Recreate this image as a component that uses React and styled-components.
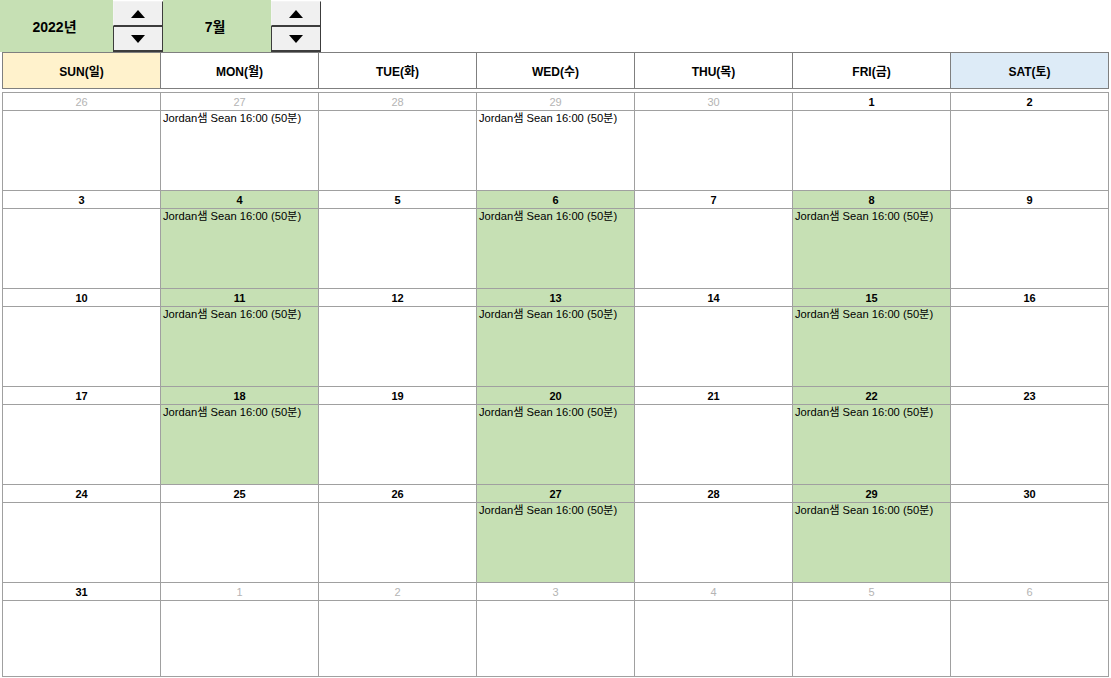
import React from "react";
import styled, { createGlobalStyle } from "styled-components";

const GlobalStyle = createGlobalStyle`
  body {
    margin: 0;
    background: #ffffff;
    font-family: "Liberation Sans", "Noto Sans CJK KR", sans-serif;
  }
`;

const DAYS = [
  { label: "SUN(일)", tone: "sun" },
  { label: "MON(월)" },
  { label: "TUE(화)" },
  { label: "WED(수)" },
  { label: "THU(목)" },
  { label: "FRI(금)" },
  { label: "SAT(토)", tone: "sat" },
];

const EVENT = "Jordan샘 Sean 16:00 (50분)";
const EVENT_DAYS = ["6-27", "6-29", "7-4", "7-6", "7-8", "7-11", "7-13", "7-15", "7-18", "7-20", "7-22", "7-27", "7-29"];

function buildWeeks() {
  const weeks = [];
  const start = new Date(2022, 5, 26);
  for (let w = 0; w < 6; w++) {
    const week = [];
    for (let d = 0; d < 7; d++) {
      const date = new Date(start);
      date.setDate(start.getDate() + w * 7 + d);
      const m = date.getMonth() + 1;
      const day = date.getDate();
      const inMonth = m === 7;
      const hasEvent = EVENT_DAYS.includes(`${m}-${day}`);
      week.push({ day, inMonth, hasEvent, highlight: inMonth && hasEvent });
    }
    weeks.push(week);
  }
  return weeks;
}

const Page = styled.div`
  width: 1111px;
  height: 678px;
  overflow: hidden;
`;

const TopBar = styled.div`
  display: flex;
  height: 52px;
`;

const Picker = styled.div`
  display: flex;
  align-items: center;
  justify-content: center;
  width: ${(p) => p.width}px;
  padding-right: ${(p) => p.shift || 0}px;
  box-sizing: border-box;
  background: #c6e0b4;
  font-size: 14px;
  font-weight: bold;
  color: #000;
`;

const Spinner = styled.div`
  display: flex;
  flex-direction: column;
  width: 50px;
  padding-top: 1px;
  background: #ffffff;
`;

const SpinButton = styled.button`
  display: flex;
  align-items: center;
  justify-content: center;
  flex: 1;
  padding: 0;
  margin: 0;
  background: #f0f0f0;
  border: 1px solid #3c3c3c;
  border-top-color: ${(p) => (p.down ? "#3c3c3c" : "#f4f4f4")};
  border-left-color: ${(p) => (p.down ? "#3c3c3c" : "#f4f4f4")};
  border-bottom-width: ${(p) => (p.down ? 2 : 1)}px;
  cursor: pointer;
  svg {
    display: block;
  }
`;

const Header = styled.div`
  display: grid;
  grid-template-columns: repeat(7, 158px);
  margin-left: 2px;
  border-top: 1px solid #7f7f7f;
  border-left: 1px solid #7f7f7f;
  width: 1107px;
  box-sizing: border-box;
`;

const HeaderCell = styled.div`
  height: 35px;
  display: flex;
  align-items: center;
  justify-content: center;
  border-right: 1px solid #7f7f7f;
  border-bottom: 1px solid #7f7f7f;
  font-size: 12px;
  font-weight: bold;
  background: ${(p) => (p.tone === "sun" ? "#fff2cc" : p.tone === "sat" ? "#ddebf7" : "#ffffff")};
`;

const Grid = styled.div`
  display: grid;
  grid-template-columns: repeat(7, 158px);
  margin: 3px 0 0 2px;
  width: 1107px;
  box-sizing: border-box;
  border-top: 1px solid #a0a0a0;
  border-left: 1px solid #a0a0a0;
`;

const DayCell = styled.div`
  display: flex;
  flex-direction: column;
  height: ${(p) => (p.last ? 94 : 98)}px;
  border-right: 1px solid #a0a0a0;
  border-bottom: 1px solid #a0a0a0;
  box-sizing: border-box;
  background: ${(p) => (p.highlight ? "#c6e0b4" : "#ffffff")};
`;

const DateLabel = styled.div`
  height: 17px;
  flex: none;
  display: flex;
  align-items: center;
  justify-content: center;
  border-bottom: 1px solid #a0a0a0;
  font-size: 11px;
  font-weight: ${(p) => (p.muted ? "normal" : "bold")};
  color: ${(p) => (p.muted ? "#b4b4b4" : "#000000")};
`;

const EventText = styled.div`
  padding: 1px 0 0 2px;
  font-size: 11.2px;
  line-height: 13px;
  color: #000;
  white-space: nowrap;
`;

function Arrow({ down }) {
  return (
    <svg width="14" height="8" viewBox="0 0 14 8">
      <polygon points={down ? "0,0 14,0 7,8" : "7,0 14,8 0,8"} fill="#000" />
    </svg>
  );
}

function SpinControl() {
  return (
    <Spinner>
      <SpinButton aria-label="up">
        <Arrow />
      </SpinButton>
      <SpinButton down aria-label="down">
        <Arrow down />
      </SpinButton>
    </Spinner>
  );
}

export default function App() {
  const weeks = buildWeeks();
  return (
    <Page>
      <GlobalStyle />
      <TopBar>
        <Picker width={113} shift={4}>2022년</Picker>
        <SpinControl />
        <Picker width={108} shift={4}>7월</Picker>
        <SpinControl />
      </TopBar>
      <Header>
        {DAYS.map((d) => (
          <HeaderCell key={d.label} tone={d.tone}>
            {d.label}
          </HeaderCell>
        ))}
      </Header>
      <Grid>
        {weeks.map((week, wi) =>
          week.map((cell, di) => (
            <DayCell key={`${wi}-${di}`} highlight={cell.highlight} last={wi === weeks.length - 1}>
              <DateLabel muted={!cell.inMonth}>{cell.day}</DateLabel>
              {cell.hasEvent && <EventText>{EVENT}</EventText>}
            </DayCell>
          ))
        )}
      </Grid>
    </Page>
  );
}
